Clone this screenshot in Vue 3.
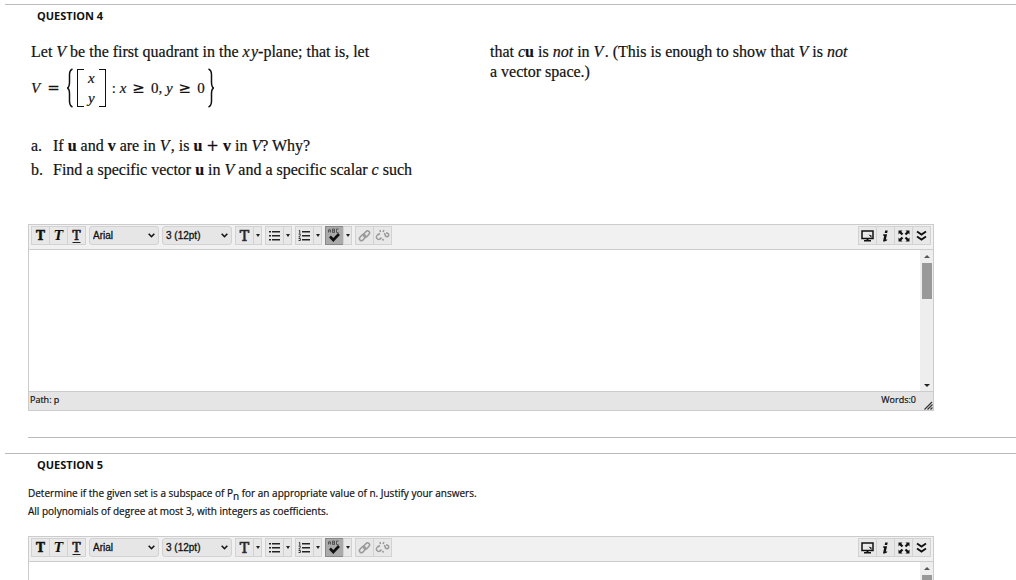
<script setup>
import { ref } from 'vue'

const questions = [
  { id: 4, kind: 'plane' },
  { id: 5, kind: 'polynomials' },
]
const answers = ref(['', ''])
</script>

<template>
  <main class="page">
    <section v-for="(q, i) in questions" :key="q.id" class="question">
      <h2>QUESTION {{ q.id }}</h2>

      <div v-if="q.kind === 'plane'" class="book">
        <div class="col">
          <p>Let <i>V</i> be the first quadrant in the <i>x&hairsp;y</i>-plane; that is, let</p>
          <div class="formula">
            <i>V</i><span class="op eq">=</span>
            <svg class="brace" width="6" height="40" viewBox="0 0 6 40"><path d="M5.500 1C3 2 2.500 4 2.500 7v7c0 3-.3 5-2 6 1.700 1 2 3 2 6v7c0 3 .5 5 3 6" /></svg>
            <span class="matrix"><i>x</i><i>y</i></span>
            <span class="cond">: <i>x</i><span class="op">≥</span>0, <i>y</i><span class="op">≥</span>0</span>
            <svg class="brace" width="6" height="40" viewBox="0 0 6 40"><path d="M.5 1C3 2 3.500 4 3.500 7v7c0 3 .3 5 2 6-1.700 1-2 3-2 6v7c0 3-.5 5-3 6" /></svg>
          </div>
          <ol>
            <li><span class="mark">a.</span>If <b>u</b> and <b>v</b> are in <i>V</i>&hairsp;, is <b>u</b> <span class="sign">+</span> <b>v</b> in <i>V</i>? Why?</li>
            <li><span class="mark">b.</span>Find a specific vector <b>u</b> in <i>V</i> and a specific scalar <i>c</i> such</li>
          </ol>
        </div>
        <div class="col">
          <p>that <i>c</i><b>u</b> is <i>not</i> in <i>V</i>&hairsp;. (This is enough to show that <i>V</i> is <i>not</i><br>a vector space.)</p>
        </div>
      </div>
      <div v-else class="plain">
        <p>Determine if the given set is a subspace of P<sub>n</sub> for an appropriate value of n. Justify your answers.</p>
        <p>All polynomials of degree at most 3, with integers as coefficients.</p>
      </div>

      <div class="editor">
        <div class="toolbar">
          <div class="group">
            <button class="glyph heavy" aria-label="Bold">T</button>
            <button class="glyph slant" aria-label="Italic">T</button>
            <button class="glyph under" aria-label="Underline">T</button>
          </div>
          <div class="pick">
            <select aria-label="Font"><option>Arial</option></select>
            <svg width="7" height="5" viewBox="0 0 7 5"><path d="M.7.8 3.500 3.700 6.300.8" /></svg>
          </div>
          <div class="pick">
            <select aria-label="Font size"><option>3 (12pt)</option></select>
            <svg width="7" height="5" viewBox="0 0 7 5"><path d="M.7.8 3.500 3.700 6.300.8" /></svg>
          </div>
          <div class="group">
            <button class="glyph color" aria-label="Text color">T</button>
            <button class="drop" aria-label="Text color options"></button>
          </div>
          <div class="group">
            <button aria-label="Bulleted list">
              <svg width="13" height="11" viewBox="0 0 13 11"><path fill="#222" d="M1 1h2v1.600H1zM1 5h2v1.600H1zM1 9h2v1.600H1zM4 1h8v1.600H4zM4 5h8v1.600H4zM4 9h8v1.600H4z" /></svg>
            </button>
            <button class="drop" aria-label="Bulleted list options"></button>
          </div>
          <div class="group">
            <button aria-label="Numbered list">
              <svg width="13" height="11" viewBox="0 0 13 11"><path fill="#222" d="M4 1h8v1.600H4zM4 5h8v1.600H4zM4 9h8v1.600H4z" /><path d="M.8.500h1v3M.6 4h1.600v1.500L.8 7h1.600M.6 8.500h1.800v2H.6" fill="none" stroke="#333" /></svg>
            </button>
            <button class="drop" aria-label="Numbered list options"></button>
          </div>
          <div class="group">
            <button class="pressed" aria-label="Spell check">
              <svg width="15" height="15" viewBox="0 0 15 15"><path d="M1.500 4.500V2l1-1 1 1v2.500M1.500 3h2M5.500 1v3.500h2V1h-2M5.500 2.800h2M11.500 1H9.500v3.500h2" fill="none" stroke="#444" stroke-width=".8" /><path d="m3 8.500 3.300 3.500L12 6" fill="none" stroke="#111" stroke-width="2.600" /></svg>
            </button>
            <button class="drop" aria-label="Spell check options"></button>
          </div>
          <div class="group">
            <button aria-label="Insert link">
              <svg width="13" height="13" viewBox="0 0 13 13" fill="none" stroke="#999" stroke-width="1.500"><rect x="5" y="3" width="7" height="4" rx="2" transform="rotate(-48 8.500 5)" /><rect x="1" y="6.500" width="7" height="4" rx="2" transform="rotate(-48 4.500 8.500)" /></svg>
            </button>
            <button aria-label="Remove link">
              <svg width="15" height="13" viewBox="0 0 15 13" fill="none" stroke="#999" stroke-width="1.500"><path d="M5 4.500 2.500 6C1 7 1 9 2.500 10S5 10.500 6.500 8.500M9.500 4l1 3c1 1 3 1 3.200-.8S12 4 11 3.800M5.500 3 5 1M8 3l1-2M7.500 10l1 1.500" /></svg>
            </button>
          </div>
          <div class="group end">
            <button aria-label="Preview">
              <svg width="13" height="12" viewBox="0 0 13 12"><path d="M1 1h11v7.500H1z" fill="none" stroke="#111" stroke-width="1.500" /><path fill="#111" d="M5.500 8.500h2V10H10v1.500H3V10h2.500zM7.500 4.500l3 1v2.500z" /></svg>
            </button>
            <button aria-label="Help">
              <svg width="7" height="12" viewBox="0 0 7 12"><path fill="#111" d="M3.200.5h2.500L5.200 3H2.700zM1.300 4.200h3.800L3.800 9.800l1.500-.5-.3 1.200-2.300 1H1l1.200-5.800H1z" /></svg>
            </button>
            <button aria-label="Full screen">
              <svg width="12" height="12" viewBox="0 0 12 12"><path fill="#111" d="M.5.500h4L3.300 1.700l2 2-1.600 1.600-2-2L.5 4.500zM11.500.500v4l-1.200-1.200-2 2-1.600-1.600 2-2L7.500.500zM.5 11.500v-4l1.200 1.200 2-2 1.600 1.600-2 2 1.200 1.200zM11.500 11.500h-4l1.200-1.200-2-2 1.600-1.600 2 2 1.200-1.200z" /></svg>
            </button>
            <button aria-label="Show more">
              <svg width="11" height="11" viewBox="0 0 11 11"><path d="m1 1.500 4.500 3 4.500-3M1 6.500l4.500 3 4.500-3" fill="none" stroke="#111" stroke-width="1.900" /></svg>
            </button>
          </div>
        </div>
        <div class="body">
          <textarea v-model="answers[i]" :aria-label="`Answer to question ${q.id}`"></textarea>
          <div class="scroll"><span class="up"></span><span class="thumb"></span><span class="down"></span></div>
        </div>
        <div class="status">
          <span>Path: p</span>
          <span class="words">Words:0</span>
          <svg width="9" height="9" viewBox="0 0 9 9"><path d="M.5 8.500 8 1M3.500 8.500 8.500 3.500M6.500 8.500l2-2" stroke="#333" stroke-width="1.200" /></svg>
        </div>
      </div>
    </section>
  </main>
</template>

<style>
html { background: #fff; scrollbar-width: none; }
</style>

<style scoped>
.page { padding: 4px 0 0 5px; color: #111; font-family: "Open Sans", sans-serif; font-size: 10px; }
.question { border-top: 1px solid #bbb; padding-left: 23px; margin-bottom: 15px; }
.question::after { content: ""; display: block; margin-top: 26px; border-top: 1px solid #bbb; }
h2 { margin: 0 0 0 9px; padding: 3px 0 1px; font-size: 11px; line-height: 15px; font-weight: 700; }
p { margin: 0; }

.book { display: grid; grid-template-columns: 459px 1fr; height: 200px; padding: 18px 0 0 3px; box-sizing: border-box; font-family: "Liberation Serif", serif; font-size: 16px; line-height: 20px; -webkit-text-stroke: 0.200px #111; }
.formula { display: flex; align-items: center; height: 44px; margin-top: 4px; font-size: 15px; }
.op { margin: 0 6px; font: 15px/20px "DejaVu Sans", sans-serif; }
.eq { margin: 0 7px; }
.sign { font: 15px/20px "DejaVu Sans", sans-serif; }
.brace { fill: none; stroke: #111; stroke-width: 1.500; }
.matrix { display: flex; flex-direction: column; align-items: center; justify-content: space-between; width: 29px; height: 38px; margin: 0 6px 0 4px; box-sizing: border-box; line-height: 18px;
  background: linear-gradient(#111, #111) 0 0 / 6px 1px no-repeat, linear-gradient(#111, #111) 0 100% / 6px 1px no-repeat, linear-gradient(#111, #111) 100% 0 / 6px 1px no-repeat, linear-gradient(#111, #111) 100% 100% / 6px 1px no-repeat;
  border: solid #111; border-width: 0 1px; }
.cond { margin-right: 3px; }
ol { list-style: none; margin: 24px 0 0; padding: 0; line-height: 24px; }
.mark { display: inline-block; width: 22px; }

.plain { padding: 11px 0 16px; line-height: 18px; -webkit-text-stroke: 0.200px #111; }
.plain sub { font-size: 10px; line-height: 0; }

.editor { margin-right: 82px; border: 1px solid #ccc; }
.toolbar { display: flex; align-items: flex-start; gap: 3px; height: 23px; padding: 1px 2px 0; background: #f1f1f1; border-bottom: 1px solid #ccc; }
.group { display: flex; }
.end { margin-left: auto; }
button { display: flex; align-items: center; justify-content: center; width: 19px; height: 19px; padding: 0; box-sizing: border-box; background: #e8e8e8; border: 1px solid #d2d2d2; color: #111; }
button + button { margin-left: -1px; }
.glyph { font: 700 12px/12px "DejaVu Serif", serif; }
.slant { font-style: italic; }
.under { font-weight: 400; text-decoration: underline; text-underline-offset: 2px; -webkit-text-stroke: 0.700px #222; }
.heavy { -webkit-text-stroke: 0.500px #111; }
.color { font-size: 14px; font-weight: 400; -webkit-text-stroke: 0.700px #333; }
.drop { width: 9px; }
.drop::before { content: ""; border: solid transparent; border-width: 3px 2px 0; border-top-color: #222; }
.pressed { background: #aaa; border-color: #888; }
.pick { display: grid; align-items: center; width: 70px; }
.pick > * { grid-area: 1 / 1; }
.pick select { appearance: none; width: 100%; height: 19px; padding: 0 3px; border: 1px solid #d2d2d2; border-radius: 3px; background: #e6e6e6; color: #111; font: 10px "Liberation Sans", sans-serif; -webkit-text-stroke: 0.300px #111; }
.pick svg { justify-self: end; margin-right: 4px; fill: none; stroke: #111; stroke-width: 1.600; pointer-events: none; }
.body { display: flex; height: 141px; }
textarea { flex: 1; border: 0; padding: 8px; resize: none; outline: 0; overflow: hidden; font: 16px "Liberation Sans", sans-serif; }
.scroll { display: flex; flex-direction: column; align-items: center; width: 13px; padding: 5px 0 4px; box-sizing: border-box; background: #eee; }
.up, .down { border: solid transparent; }
.up { border-width: 0 3px 3px; border-bottom-color: #555; }
.down { margin-top: auto; border-width: 3px 3px 0; border-top-color: #222; }
.thumb { width: 10px; height: 36px; margin-top: 5px; background: #999; }
.status { display: flex; align-items: flex-start; height: 18px; padding-left: 1px; background: #e5e5e5; border-top: 1px solid #ccc; font-size: 9px; line-height: 16px; -webkit-text-stroke: 0.200px #111; }
.words { margin-left: auto; }
.status svg { align-self: flex-end; margin-left: 8px; }
</style>
